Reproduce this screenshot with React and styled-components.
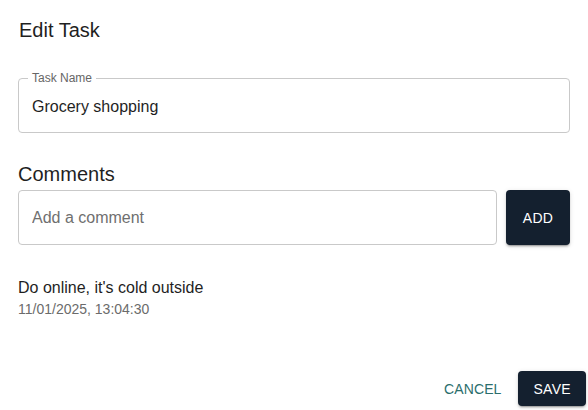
import styled, { createGlobalStyle } from "styled-components";

const GlobalStyle = createGlobalStyle`
  body {
    margin: 0;
    background: #ffffff;
    font-family: "Liberation Sans", Arial, sans-serif;
    color: #1f1f1f;
  }
`;

const App = () => {
  return (
    <>
      <GlobalStyle />
      <Dialog>
        <Title>Edit Task</Title>
        <Content>
          <Field>
            <Legend>Task Name</Legend>
            <FieldInput defaultValue="Grocery shopping" />
          </Field>
          <SectionTitle>Comments</SectionTitle>
          <CommentRow>
            <CommentBox>
              <FieldInput placeholder="Add a comment" />
            </CommentBox>
            <DarkButton $tall>ADD</DarkButton>
          </CommentRow>
          <CommentItem>
            <CommentText>Do online, it's cold outside</CommentText>
            <CommentDate>11/01/2025, 13:04:30</CommentDate>
          </CommentItem>
        </Content>
        <Actions>
          <TextButton>CANCEL</TextButton>
          <DarkButton>SAVE</DarkButton>
        </Actions>
      </Dialog>
    </>
  );
};

export default App;

const Dialog = styled.div`
  width: 588px;
  height: 410px;
  display: flex;
  flex-direction: column;
  box-sizing: border-box;
`;

const Title = styled.h2`
  margin: 0;
  padding: 14px 19px 0;
  font-size: 20px;
  line-height: 32px;
  font-weight: 400;
  color: #1f1f1f;
`;

const Content = styled.div`
  padding: 25px 18px 0;
  display: flex;
  flex-direction: column;
`;

const Field = styled.fieldset`
  margin: 0;
  padding: 0 13px 15px;
  border: 1px solid #c9c9c9;
  border-radius: 4px;
  min-width: 0;
`;

const Legend = styled.legend`
  margin-left: -4px;
  padding: 0 4px;
  font-size: 12px;
  line-height: 14px;
  color: #666666;
`;

const FieldInput = styled.input`
  display: block;
  width: 100%;
  box-sizing: border-box;
  margin-top: 12px;
  padding: 0;
  border: none;
  outline: none;
  background: transparent;
  font-family: inherit;
  font-size: 16px;
  line-height: 20px;
  height: 20px;
  color: #1f1f1f;

  &::placeholder {
    color: #6f6f6f;
    opacity: 1;
  }
`;

const SectionTitle = styled.div`
  margin-top: 29px;
  font-size: 20px;
  line-height: 24px;
  color: #1f1f1f;
`;

const CommentRow = styled.div`
  display: flex;
  gap: 9px;
  margin-top: 4px;
  height: 55px;
`;

const CommentBox = styled.div`
  flex: 1;
  display: flex;
  align-items: center;
  padding: 0 13px;
  border: 1px solid #c9c9c9;
  border-radius: 4px;

  input {
    margin-top: 0;
  }
`;

const DarkButton = styled.button`
  min-width: 64px;
  height: ${(p) => (p.$tall ? "55px" : "35px")};
  padding: 0 15px;
  border: none;
  border-radius: 4px;
  background: #14202f;
  color: #ffffff;
  font-family: inherit;
  font-size: 14px;
  letter-spacing: 0.3px;
  box-shadow: 0 3px 1px -2px rgba(0, 0, 0, 0.2), 0 2px 2px rgba(0, 0, 0, 0.14),
    0 1px 5px rgba(0, 0, 0, 0.12);
  cursor: pointer;
`;

const CommentItem = styled.div`
  margin-top: 33px;
  display: flex;
  flex-direction: column;
`;

const CommentText = styled.div`
  font-size: 16px;
  line-height: 20px;
  color: #1f1f1f;
`;

const CommentDate = styled.div`
  margin-top: 2px;
  font-size: 14px;
  line-height: 18px;
  color: #6b6b6b;
`;

const Actions = styled.div`
  margin-top: auto;
  display: flex;
  justify-content: flex-end;
  align-items: center;
  gap: 9px;
  padding: 0 2px 4px 0;
`;

const TextButton = styled.button`
  height: 35px;
  padding: 0 8px;
  border: none;
  background: transparent;
  color: #2b6e6c;
  font-family: inherit;
  font-size: 14px;
  letter-spacing: 0.1px;
  cursor: pointer;
`;
